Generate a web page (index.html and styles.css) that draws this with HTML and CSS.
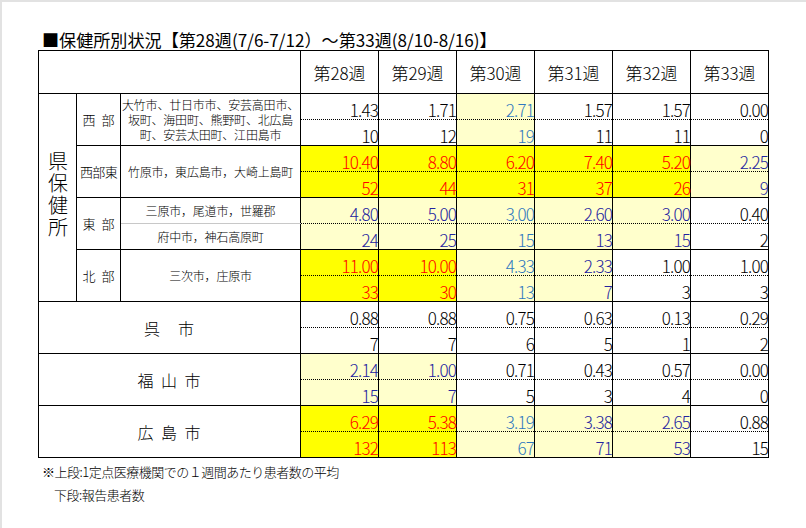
FILE: index.html
```html
<!DOCTYPE html>
<html lang="ja">
<head>
<meta charset="utf-8">
<title>保健所別状況</title>
<link rel="stylesheet" href="styles.css">
</head>
<body>
<div class="page">
  <div class="title">■保健所別状況【第28週(7/6-7/12）～第33週(8/10-8/16)】</div>
  <table class="grid">
    <colgroup>
      <col class="c1"><col class="c2"><col class="c3">
      <col class="cw"><col class="cw"><col class="cw"><col class="cw"><col class="cw"><col class="cw">
    </colgroup>
    <thead>
      <tr class="hd">
        <th colspan="3"></th>
        <th>第28週</th><th>第29週</th><th>第30週</th><th>第31週</th><th>第32週</th><th>第33週</th>
      </tr>
    </thead>
    <tbody>
      <tr class="top">
        <td rowspan="8" class="ken"><span class="vt">県保健所</span></td>
        <td rowspan="2" class="lbl">西 部</td>
        <td rowspan="2" class="muni multi"><span class="ln">大竹市、廿日市市、安芸高田市、</span><span class="ln">坂町、海田町、熊野町、北広島</span><span class="ln">町、安芸太田町、江田島市</span></td>
        <td class="v">1.43</td><td class="v">1.71</td><td class="v ly lb">2.71</td><td class="v">1.57</td><td class="v">1.57</td><td class="v last">0.00</td>
      </tr>
      <tr class="bot">
        <td class="v">10</td><td class="v">12</td><td class="v ly lb">19</td><td class="v">11</td><td class="v">11</td><td class="v last">0</td>
      </tr>
      <tr class="top">
        <td rowspan="2" class="lbl tight">西部東</td>
        <td rowspan="2" class="muni">竹原市，東広島市，大崎上島町</td>
        <td class="v y">10.40</td><td class="v y">8.80</td><td class="v y">6.20</td><td class="v y">7.40</td><td class="v y">5.20</td><td class="v ly db last">2.25</td>
      </tr>
      <tr class="bot">
        <td class="v y">52</td><td class="v y">44</td><td class="v y">31</td><td class="v y">37</td><td class="v y">26</td><td class="v ly db last">9</td>
      </tr>
      <tr class="top">
        <td rowspan="2" class="lbl">東 部</td>
        <td class="muni split">三原市，尾道市，世羅郡</td>
        <td class="v ly db">4.80</td><td class="v ly db">5.00</td><td class="v ly lb">3.00</td><td class="v ly db">2.60</td><td class="v ly db">3.00</td><td class="v last">0.40</td>
      </tr>
      <tr class="bot">
        <td class="muni under">府中市，神石高原町</td>
        <td class="v ly db">24</td><td class="v ly db">25</td><td class="v ly lb">15</td><td class="v ly db">13</td><td class="v ly db">15</td><td class="v last">2</td>
      </tr>
      <tr class="top">
        <td rowspan="2" class="lbl">北 部</td>
        <td rowspan="2" class="muni">三次市，庄原市</td>
        <td class="v y">11.00</td><td class="v y">10.00</td><td class="v ly lb">4.33</td><td class="v ly db">2.33</td><td class="v">1.00</td><td class="v last">1.00</td>
      </tr>
      <tr class="bot">
        <td class="v y">33</td><td class="v y">30</td><td class="v ly lb">13</td><td class="v ly db">7</td><td class="v">3</td><td class="v last">3</td>
      </tr>
      <tr class="top">
        <td rowspan="2" colspan="3" class="city kure">呉　市</td>
        <td class="v">0.88</td><td class="v">0.88</td><td class="v">0.75</td><td class="v">0.63</td><td class="v">0.13</td><td class="v last">0.29</td>
      </tr>
      <tr class="bot">
        <td class="v">7</td><td class="v">7</td><td class="v">6</td><td class="v">5</td><td class="v">1</td><td class="v last">2</td>
      </tr>
      <tr class="top">
        <td rowspan="2" colspan="3" class="city">福 山 市</td>
        <td class="v ly db">2.14</td><td class="v ly db">1.00</td><td class="v">0.71</td><td class="v">0.43</td><td class="v">0.57</td><td class="v last">0.00</td>
      </tr>
      <tr class="bot">
        <td class="v ly db">15</td><td class="v ly db">7</td><td class="v">5</td><td class="v">3</td><td class="v">4</td><td class="v last">0</td>
      </tr>
      <tr class="top">
        <td rowspan="2" colspan="3" class="city">広 島 市</td>
        <td class="v y">6.29</td><td class="v y">5.38</td><td class="v ly lb">3.19</td><td class="v ly db">3.38</td><td class="v ly db">2.65</td><td class="v last">0.88</td>
      </tr>
      <tr class="bot">
        <td class="v y">132</td><td class="v y">113</td><td class="v ly lb">67</td><td class="v ly db">71</td><td class="v ly db">53</td><td class="v last">15</td>
      </tr>
    </tbody>
  </table>
  <div class="notes">
    <p class="note">※上段:1定点医療機関での１週間あたり患者数の平均</p>
    <p class="note indent">下段:報告患者数</p>
  </div>
</div>
</body>
</html>
```

FILE: styles.css
```css
html, body {
  margin: 0;
  padding: 0;
  background: #ffffff;
}
body {
  width: 804px;
  height: 526px;
  border-top: 2px solid #e2e2e2;
  border-left: 2px solid #e2e2e2;
  font-family: "Noto Sans CJK JP", "Noto Sans", sans-serif;
  font-weight: 300;
  color: #000;
  overflow: hidden;
}
.page {
  padding: 28px 0 0 36px;
}
.title {
  font-size: 17.1px;
  line-height: 20px;
  height: 20px;
  padding-left: 4px;
  white-space: nowrap;
  font-weight: 400;
}
.grid {
  border-collapse: collapse;
  table-layout: fixed;
  width: 730px;
}
.c1 { width: 38px; }
.c2 { width: 44px; }
.c3 { width: 180px; }
.cw { width: 78px; }
.grid th, .grid td {
  border: 1px solid #000;
  padding: 0;
  font-weight: 300;
}
.hd { height: 43px; }
.hd th {
  font-size: 17px;
  text-align: center;
  vertical-align: middle;
}
.top, .bot { height: 26px; }
.ken {
  text-align: center;
  vertical-align: middle;
}
.vt {
  writing-mode: vertical-rl;
  text-orientation: upright;
  font-size: 20px;
  letter-spacing: 2px;
  line-height: 20px;
}
.lbl {
  font-size: 13px;
  text-align: center;
  word-spacing: 3px;
  vertical-align: middle;
}
.lbl.tight { letter-spacing: -0.6px; }
.muni {
  font-size: 12px;
  text-align: center;
  vertical-align: middle;
  line-height: 15px;
  letter-spacing: -0.2px;
  white-space: nowrap;
}
.muni .ln {
  display: block;
  height: 15px;
}
.muni.split { border-bottom: 1px solid #c8c8c8; }
.muni.under { border-top: none; }
.city {
  font-size: 16px;
  text-align: center;
  vertical-align: middle;
  word-spacing: 2px;
  letter-spacing: 1px;
}
.v {
  font-size: 17px;
  line-height: 18px;
  text-align: right;
  vertical-align: bottom;
  padding: 0 4px 1px 0;
  letter-spacing: -0.8px;
}
.top .v { border-bottom: 1px dotted #000; }
.bot .v { border-top: 1px dotted #000; }
.y { background: #ffff00; color: #ff0000; }
.ly { background: #ffffcc; }
.db { color: #2323a0; }
.lb { color: #2f78c0; }
.notes {
  padding-top: 2px;
}
.note {
  margin: 0;
  font-size: 13px;
  line-height: 23px;
  padding-left: 4px;
  letter-spacing: -0.5px;
}
.note.indent { padding-left: 16px; }
```
